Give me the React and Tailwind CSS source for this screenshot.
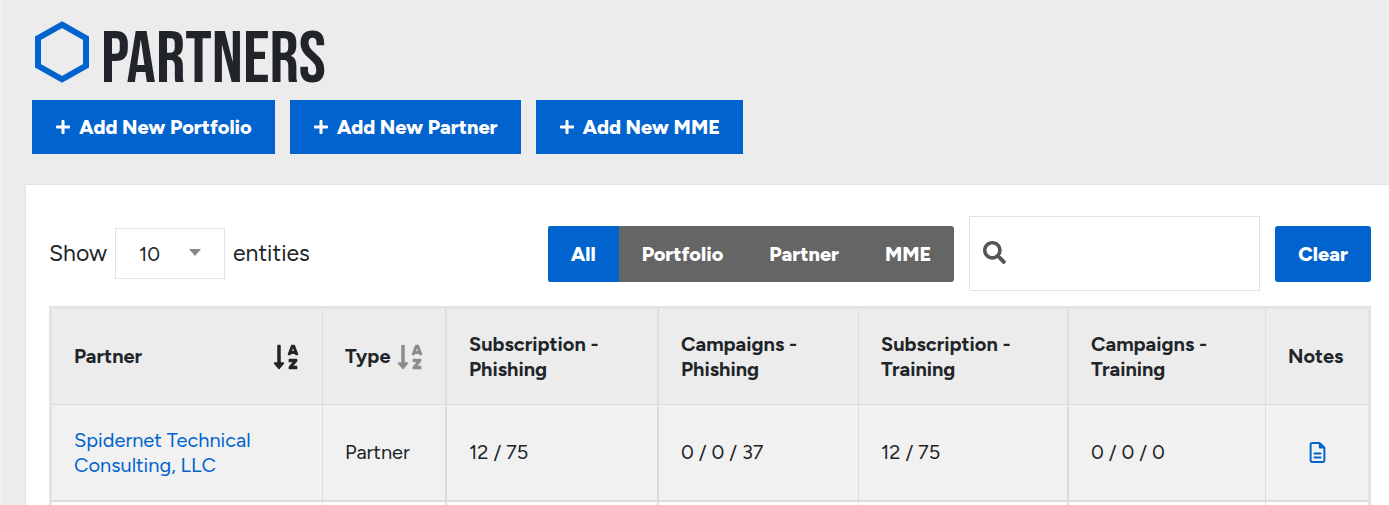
import { FaPlus, FaSearch, FaSortAlphaDown } from "react-icons/fa";
import { FaRegFileLines } from "react-icons/fa6";

const actions = ["Add New Portfolio", "Add New Partner", "Add New MME"];
const filters = ["All", "Portfolio", "Partner", "MME"];

const columns = [
  { title: "Partner", col: "w-[271px]", edge: "border-r", sort: "active" },
  { title: "Type", col: "w-[124px]", edge: "border-r-2", sort: "idle" },
  { title: "Subscription - Phishing", col: "w-[212px]", edge: "border-r-2" },
  { title: "Campaigns - Phishing", col: "w-[200px]", edge: "border-r" },
  { title: "Subscription - Training", col: "w-[210px]", edge: "border-r-2" },
  { title: "Campaigns - Training", col: "w-[197px]", edge: "border-r" },
  { title: "Notes", col: "w-[102px]", edge: "" },
];

function HexagonLogo() {
  return (
    <svg className="h-[62px] w-[54px] shrink-0" viewBox="0 0 54 62" fill="none" aria-hidden="true">
      <path d="M27 3.6 51 17.2V44.8L27 58.4 3 44.8V17.2Z" stroke="#0063ce" strokeWidth="6" />
    </svg>
  );
}

function HeaderLabel({ column }) {
  if (!column.sort) return column.title;
  return (
    <button
      type="button"
      className={
        column.sort === "active"
          ? "flex w-full items-center justify-between font-bold"
          : "flex items-center gap-[6px] font-bold"
      }
    >
      {column.title}
      <FaSortAlphaDown
        className={column.sort === "active" ? "size-7 shrink-0 text-[#212529]" : "size-7 shrink-0 text-[#8c8c8c]"}
      />
    </button>
  );
}

export default function App() {
  return (
    <div className="h-screen overflow-hidden border-l-2 border-[#f0f0f0] bg-[#ececec] font-['Figtree','Roboto',sans-serif] text-[#212529]">
      <header className="px-[30px] pt-[21px]">
        <h1 className="flex h-[62px] items-end gap-3 pl-[3px] font-['Bebas_Neue','Roboto',sans-serif] text-[73px] leading-[46px] font-normal">
          <HexagonLogo />
          PARTNERS
        </h1>
        <div className="mt-[17px] flex gap-[15px]">
          {actions.map((label) => (
            <button
              key={label}
              type="button"
              className="flex h-[54px] items-center gap-2 bg-[#0063ce] px-[23px] text-[20px] font-extrabold whitespace-nowrap text-white"
            >
              <FaPlus className="size-4" />
              {label}
            </button>
          ))}
        </div>
      </header>

      <main className="mt-[30px] ml-[23px] border-t border-l border-[#e3e3e3] bg-white pt-[31px] pr-[18px] pl-[23px]">
        <div className="flex items-center gap-[15px]">
          <div className="mr-auto flex items-center gap-2 text-[23px]">
            <label htmlFor="page-size">Show</label>
            <div className="relative">
              <select
                id="page-size"
                className="h-[51px] w-[110px] appearance-none border border-[#e3e3e3] bg-white pl-[23px] text-[20px]"
              >
                <option>10</option>
                <option>25</option>
                <option>50</option>
              </select>
              <svg
                className="pointer-events-none absolute top-[21px] right-[24px] h-[7px] w-3"
                viewBox="0 0 12 7"
                aria-hidden="true"
              >
                <path d="M0 0h12L6 7z" fill="#888" />
              </svg>
            </div>
            <span>entities</span>
          </div>

          <div className="flex overflow-hidden rounded-[3px] bg-[#656565] text-[20px] font-extrabold text-white">
            {filters.map((label, index) => (
              <button
                key={label}
                type="button"
                aria-pressed={index === 0}
                className={index === 0 ? "h-14 bg-[#0063ce] px-[23px]" : "h-14 px-[23px]"}
              >
                {label}
              </button>
            ))}
          </div>

          <div className="relative">
            <FaSearch className="pointer-events-none absolute top-[25px] left-[14px] size-[23px] text-[#525658]" />
            <input
              type="search"
              aria-label="Search"
              className="block h-[75px] w-[291px] border border-[#e3e3e3] bg-white pr-4 pl-[50px] text-[20px]"
            />
          </div>

          <button
            type="button"
            className="h-14 rounded-[3px] bg-[#0063ce] px-[23px] text-[20px] font-extrabold text-white"
          >
            Clear
          </button>
        </div>

        <table className="mt-[15px] w-full table-fixed border-separate border-spacing-0 border-[3px] border-[#e3e3e3] text-left text-[20px] leading-[25px]">
          <colgroup>
            {columns.map((column) => (
              <col key={column.title} className={column.col} />
            ))}
          </colgroup>
          <thead className="bg-[#ececec]">
            <tr>
              {columns.map((column) => (
                <th
                  key={column.title}
                  scope="col"
                  className={`h-24 border-b border-[#dcdcdc] px-[22px] font-bold ${column.edge}`}
                >
                  <HeaderLabel column={column} />
                </th>
              ))}
            </tr>
          </thead>
          <tbody>
            <tr className="bg-[#f1f1f1]">
              <td className="h-[97px] border-r border-b-2 border-[#dcdcdc] px-[22px]">
                <a href="#spidernet" className="text-[#0063ce]">
                  Spidernet Technical Consulting, LLC
                </a>
              </td>
              <td className="border-r-2 border-b-2 border-[#dcdcdc] px-[22px]">Partner</td>
              <td className="border-r-2 border-b-2 border-[#dcdcdc] px-[22px]">12 / 75</td>
              <td className="border-r border-b-2 border-[#dcdcdc] px-[22px]">0 / 0 / 37</td>
              <td className="border-r-2 border-b-2 border-[#dcdcdc] px-[22px]">12 / 75</td>
              <td className="border-r border-b-2 border-[#dcdcdc] px-[22px]">0 / 0 / 0</td>
              <td className="border-b-2 border-[#dcdcdc] px-[22px]">
                <a href="#notes" aria-label="Notes" className="flex justify-center text-[#0063ce]">
                  <FaRegFileLines className="size-[21px]" />
                </a>
              </td>
            </tr>
            <tr>
              {columns.map((column) => (
                <td key={column.title} className={`h-24 border-[#dcdcdc] ${column.edge}`} />
              ))}
            </tr>
          </tbody>
        </table>
      </main>
    </div>
  );
}
